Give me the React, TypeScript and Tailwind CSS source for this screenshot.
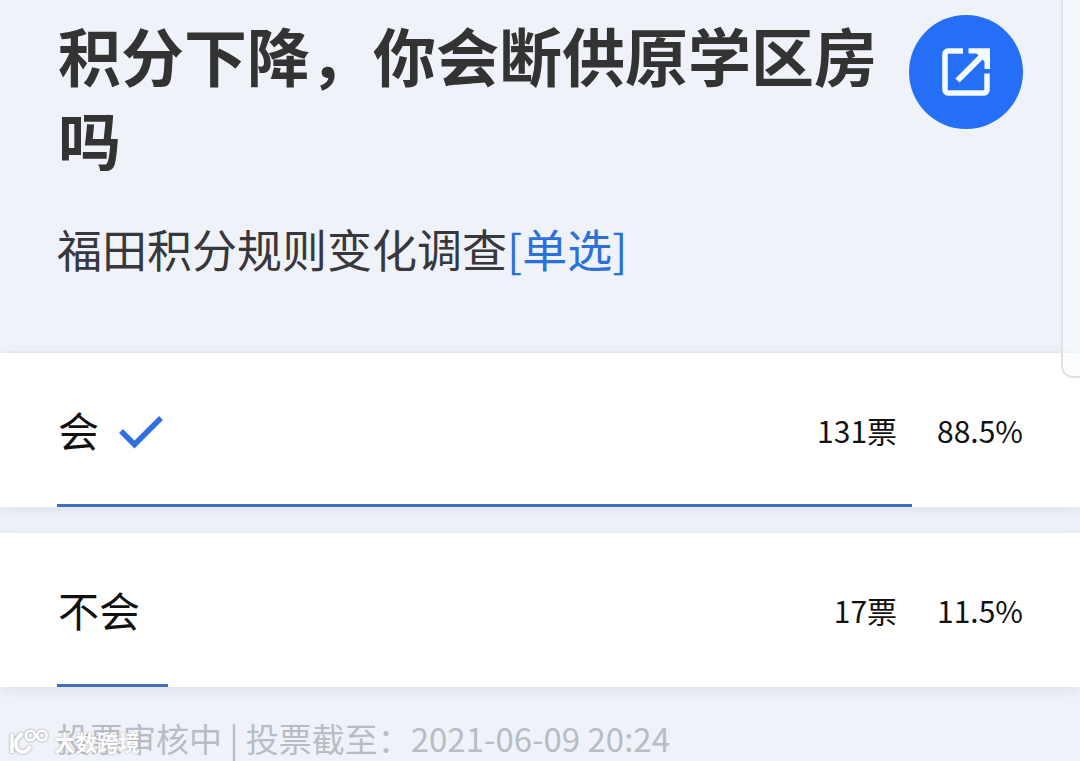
type Option = {
  label: string;
  votes: number;
  percent: number;
  checked?: boolean;
};

const options: Option[] = [
  { label: "会", votes: 131, percent: 88.5, checked: true },
  { label: "不会", votes: 17, percent: 11.5 },
];

const ShareIcon = () => (
  <svg width="50" height="50" viewBox="0 0 50 50" fill="none" stroke="#f4faff">
    <path
      d="M22 4H7A3 3 0 0 0 4 7V43A3 3 0 0 0 7 46H43A3 3 0 0 0 46 43V26.500"
      strokeWidth="5.500"
    />
    <path d="M16.500 33.500L43 7" strokeWidth="6" />
    <path d="M27.500 1.200H49V22H43.500V6.500H27.500Z" fill="#f4faff" stroke="none" />
    <path d="M34 5H45V16Z" fill="#f4faff" stroke="none" />
  </svg>
);

const CheckIcon = () => (
  <svg width="46" height="36" viewBox="0 0 46 36" fill="none">
    <path d="M3 17L16.500 30.500L43 4" stroke="#2f6fe0" strokeWidth="5.500" />
  </svg>
);

const Watermark = () => (
  <div className="absolute bottom-1 left-[9px] flex items-center gap-[5px]">
    <svg
      width="40"
      height="30"
      viewBox="0 0 40 30"
      fill="none"
      stroke="#ffffff"
      className="drop-shadow-[0_0_1px_#888888]"
    >
      <path d="M3 7V26" strokeWidth="3.500" />
      <path d="M13 6C12 9 8 10 7 14C5 27 18 28 21 19" strokeWidth="4" />
      <circle cx="21.500" cy="8.500" r="4.700" strokeWidth="2.600" />
      <circle cx="33" cy="8.500" r="4.700" strokeWidth="2.600" />
      <path d="M25 6L29.500 11" strokeWidth="2.500" />
    </svg>
    <span className="text-[21.5px] leading-[30px] font-bold text-white [text-shadow:0_0_2px_#999999]">
      大数跨境
    </span>
  </div>
);

const OptionRow = ({ label, votes, percent, checked }: Option) => (
  <div className="flex h-[154px] flex-col justify-between bg-white px-[57px] shadow-[0_3px_14px_rgba(60,70,100,0.10)]">
    <div className="flex h-[156px] shrink-0 items-center text-[#111111]">
      <span className="-mt-1 ml-px text-[41px] leading-[60px]">{label}</span>
      {checked && (
        <span className="ml-[19px] pt-0.5">
          <CheckIcon />
        </span>
      )}
      <span className="ml-auto -mt-0.5 text-[30px] leading-10">{votes}票</span>
      <span className="-mt-0.5 ml-10 text-[30px] leading-10">{percent}%</span>
    </div>
    <div className="-mt-[5px] h-[3px] shrink-0 bg-[#3f6fbd]" style={{ width: `${percent}%` }} />
  </div>
);

const App = () => {
  return (
    <main className="relative h-[761px] w-[1080px] overflow-hidden bg-[#eff3f9] font-['Noto_Sans_CJK_SC','Noto_Sans',sans-serif]">
      <header className="h-[353px] border-b-2 border-[#ebeef1] px-[57px] pt-3">
        <div className="flex items-start justify-between">
          <h1 className="ml-px w-[830px] text-[63px] leading-[84px] font-bold text-[#333333]">
            积分下降，你会断供原学区房吗
          </h1>
          <button className="mt-[3px] flex size-[114px] items-center justify-center rounded-full bg-[#246ff5]">
            <ShareIcon />
          </button>
        </div>
        <p className="mt-[39px] text-[45px] leading-[60px] text-[#38383c]">
          福田积分规则变化调查<span className="text-[#2c70dc]">[单选]</span>
        </p>
      </header>

      <section className="flex flex-col gap-[26px]">
        {options.map((option) => (
          <OptionRow key={option.label} {...option} />
        ))}
      </section>

      <footer className="px-[57px] pt-[27px] text-[33px] leading-[48px] whitespace-pre text-[#b9bcc3]">
        投票审核中 | 投票截至：2021-06-09 20:24
      </footer>

      {/* edge of the side drawer */}
      <div className="absolute -top-4 left-[1061px] h-[394px] w-10 rounded-bl-xl border-2 border-[#dfe2e6] bg-[#f8fbff]/60" />
      <Watermark />
    </main>
  );
};

export default App;
